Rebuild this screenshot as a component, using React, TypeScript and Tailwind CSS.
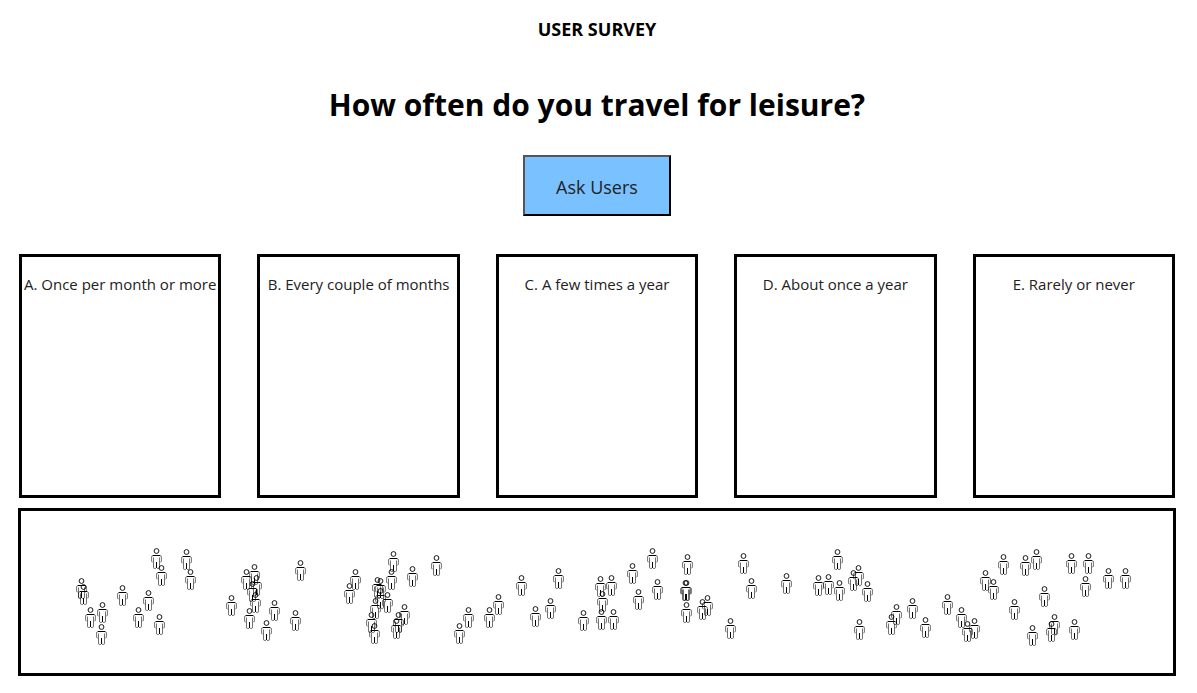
type Point = [x: number, y: number];

const options = [
  "A. Once per month or more",
  "B. Every couple of months",
  "C. A few times a year",
  "D. About once a year",
  "E. Rarely or never",
];

// Centre of the head (x) and top of the head (y), measured inside the crowd panel.
const people: Point[] = [
  [135, 37], [165, 38], [140, 54], [169, 58], [60, 67], [62, 73], [101, 74],
  [127, 79], [81, 91], [69, 96], [117, 96], [138, 103], [80, 113],
  [279, 49], [233, 53], [225, 58], [235, 64], [231, 70], [234, 81], [210, 84],
  [253, 89], [228, 97], [274, 99], [245, 109],
  [372, 40], [415, 44], [391, 55], [334, 58], [370, 58], [328, 72], [356, 66],
  [359, 67], [359, 77], [366, 81], [354, 87], [383, 93], [350, 101], [377, 101],
  [375, 107], [353, 112],
  [537, 57], [500, 64], [579, 65], [590, 64], [581, 80], [477, 83], [529, 87],
  [447, 96], [468, 96], [514, 95], [562, 99], [580, 98], [592, 98], [438, 112],
  [631, 37], [666, 43], [611, 52], [722, 42], [730, 67], [636, 68], [665, 69],
  [664, 69], [617, 78], [665, 91], [686, 84], [681, 88], [709, 107],
  [816, 38], [765, 62], [797, 64], [807, 63], [818, 69], [837, 54], [832, 59],
  [846, 70], [891, 87], [875, 93], [870, 103], [904, 106], [838, 108],
  [982, 43], [1004, 44], [1015, 38], [1050, 42], [1067, 42], [964, 59],
  [972, 68], [1087, 57], [1104, 57], [1064, 65], [926, 83], [1023, 75],
  [993, 88], [940, 96], [946, 110], [953, 107], [1033, 103], [1030, 110],
  [1053, 108], [1011, 114],
];

function Person({ at: [x, y] }: { at: Point }) {
  return (
    <svg
      className="absolute"
      style={{ left: x - 5, top: y }}
      width="11"
      height="21"
      viewBox="0 0 11 21"
      fill="none"
      stroke="#000"
      aria-hidden="true"
    >
      <circle cx="5.5" cy="3" r="2.4" strokeWidth="0.9" />
      <path d="M2 7.5h7" strokeWidth="1" />
      <path
        d="M2 7.5Q.6 7.7.6 9v4.2q0 .8 1 .8M9 7.5q1.4.2 1.4 1.5v4.2q0 .8-1 .8M2.5 9.5v10q0 .9 1.2.9h1.3M8.5 9.5v10q0 .9-1.2.9H6"
        strokeWidth="0.75"
        strokeOpacity="0.75"
      />
      <path d="M5.5 14v6" strokeWidth="1" />
    </svg>
  );
}

export default function App() {
  return (
    <main className="flex flex-col pt-[15px] pr-[21px] pb-4 pl-[18px] text-center font-['Open_Sans','Noto_Sans',sans-serif] text-black">
      <h2 className="text-lg leading-7 font-bold">USER SURVEY</h2>
      <h1 className="mt-[38px] text-3xl leading-12 font-bold">
        How often do you travel for leisure?
      </h1>
      <button
        type="button"
        className="mt-[26px] h-[61px] self-center border-2 border-t-[#555] border-r-black border-b-black border-l-[#555] bg-[#7ac1ff] px-[31px] pt-0.5 text-lg font-normal text-[#222]"
      >
        Ask Users
      </button>

      <ul className="mx-px mt-[38px] grid grid-cols-5 gap-9">
        {options.map((option) => (
          <li
            key={option}
            className="flex h-[244px] justify-center border-3 border-black pt-[15px] text-[15px] leading-6 font-normal whitespace-nowrap text-[#222]"
          >
            {option}
          </li>
        ))}
      </ul>

      <section
        aria-label="Users"
        className="relative mt-[10px] h-[168px] overflow-hidden border-3 border-black"
      >
        {people.map((at, i) => (
          <Person key={i} at={at} />
        ))}
      </section>
    </main>
  );
}
